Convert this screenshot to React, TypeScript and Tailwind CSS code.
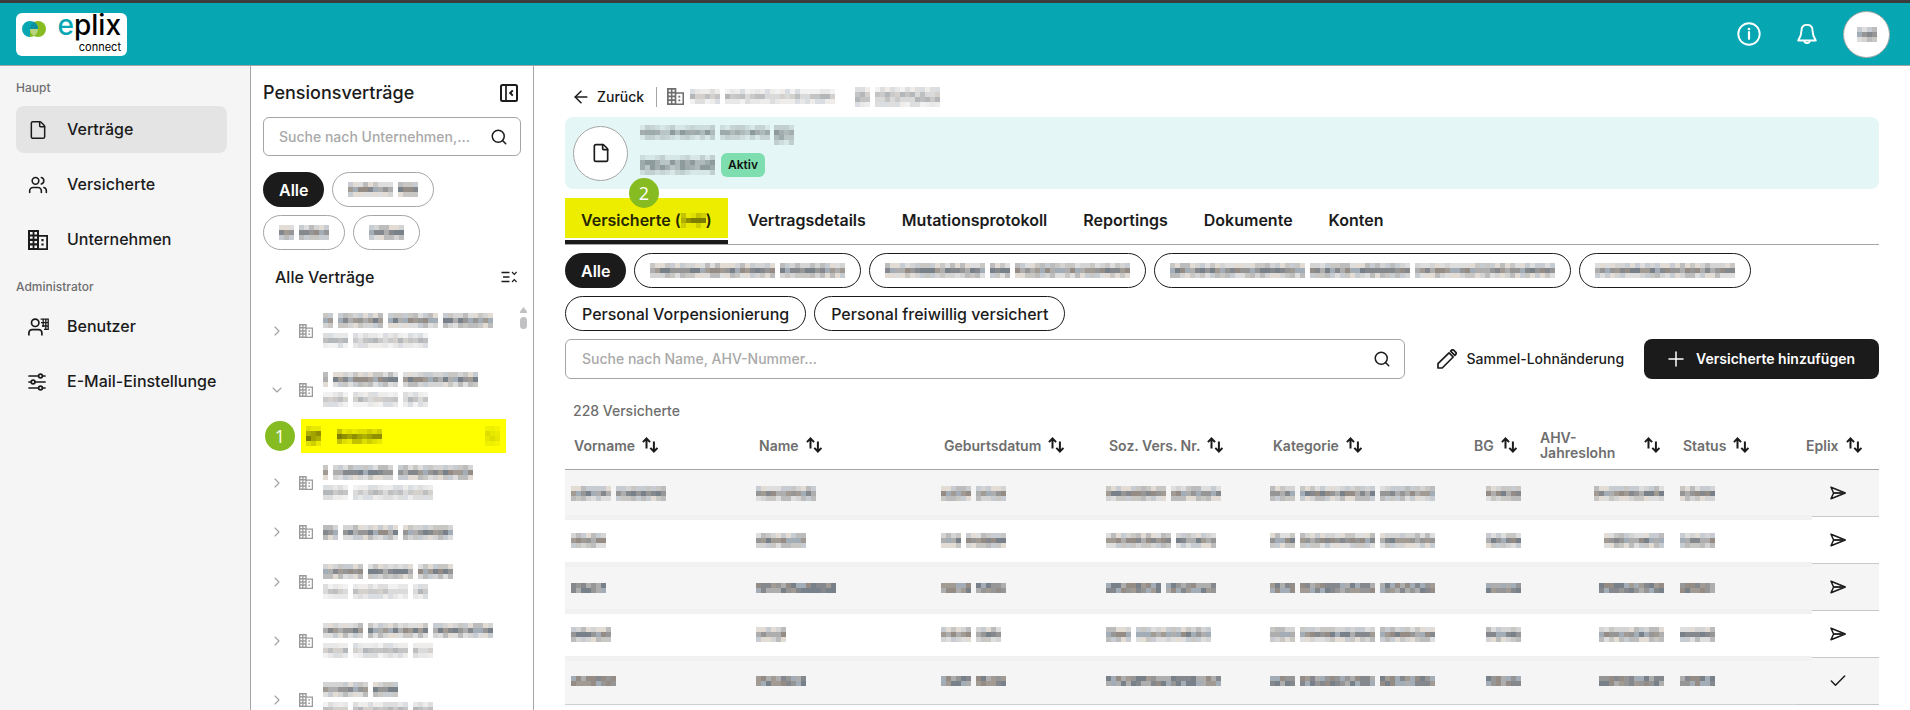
import { ReactNode, useState } from 'react';
import { ArrowLeft, Check, ChevronDown, ChevronRight, File, Plus, Search, Users } from 'lucide-react';

const CELL = 5;

const palettes = {
  dark: {
    edge: ['#d4d4d4', '#c9c7c4', '#c6ccd2', '#dedede', '#bcbcbc', '#e2dcd5'],
    core: ['#969696', '#85888c', '#a29b94', '#78818a', '#aeaeae', '#958c85', '#a3adb7'],
  },
  light: {
    edge: ['#e8e8e8', '#dedede', '#efedeb', '#dadee2', '#f2f2f2'],
    core: ['#cacaca', '#bdbfc1', '#d4d0cc', '#dadada', '#c4c4c4', '#b4b7ba'],
  },
  teal: {
    edge: ['#cddcdc', '#c1cfcf', '#d6e7e6', '#c7d4d4'],
    core: ['#9eabab', '#afbbbb', '#8e9b9c', '#bac5c5', '#a5aeae'],
  },
  yellow: {
    edge: ['#dede00', '#cfcf00', '#e8e800', '#c2c200'],
    core: ['#8f8f00', '#a3a300', '#7d7d00', '#b0b000'],
  },
  faint: {
    edge: ['#f4f400', '#efef00', '#f8f800'],
    core: ['#e6e600', '#dddd00', '#ebeb00'],
  },
};

type Tone = keyof typeof palettes;

interface MosaicProps {
  words: number[];
  rows?: number;
  tone?: Tone;
  seed?: number;
}

// Pixelated stand-in for hidden personal data, one number per word
function Mosaic({ words, rows = 3, tone = 'dark', seed = 1 }: MosaicProps) {
  const cols = words.reduce((sum, w) => sum + w, 0) + words.length - 1;
  const cells: ReactNode[] = [];
  let start = 0;

  words.forEach((word) => {
    for (let c = start; c < start + word; c += 1) {
      for (let r = 0; r < rows; r += 1) {
        const isEdge = r === 0 || (r === rows - 1 && rows > 2);
        const list = palettes[tone][isEdge && rows > 2 ? 'edge' : 'core'];
        const hash = Math.abs(Math.sin(c * 12.9 + r * 78.2 + seed * 37.7) * 43758);
        cells.push(
          <rect
            key={`${c}-${r}`}
            x={c * CELL}
            y={r * CELL}
            width={CELL}
            height={CELL}
            fill={list[Math.floor(hash) % list.length]}
          />,
        );
      }
    }
    start += word + 1;
  });

  return (
    <svg
      aria-hidden="true"
      className="block shrink-0"
      width={cols * CELL}
      height={rows * CELL}
      shapeRendering="crispEdges"
    >
      {cells}
    </svg>
  );
}

function BuildingIcon({ className = 'size-5' }: { className?: string }) {
  return (
    <svg viewBox="0 0 20 20" className={className} fill="currentColor" aria-hidden="true">
      <path
        fillRule="evenodd"
        d="M0 0h11v5h9v15H0zM2 2v2.4h2.6V2zM6.4 2v2.4H9V2zM2 6.4v2.4h2.6V6.4zM6.4 6.4v2.4H9V6.4zM2 10.9v2.4h2.6v-2.4zM6.4 10.9v2.4H9v-2.4zM2 15.4v2.6h2.6v-2.6zM6.4 15.4v2.6H9v-2.6zM11 6.8v11.4h7.2V6.8z"
      />
      <path d="M13.4 9h2.2v2.2h-2.2zM13.4 13.4h2.2v2.2h-2.2z" />
    </svg>
  );
}

function AdminIcon() {
  return (
    <svg viewBox="0 0 21 18" className="h-[18px] w-[21px]" fill="none" stroke="currentColor" strokeWidth="1.7" aria-hidden="true">
      <circle cx="7.2" cy="4.8" r="3.7" />
      <path d="M.9 17.6V15c0-2 1.3-3.3 3.3-3.3h6.4c2 0 3.3 1.3 3.3 3.3v2.6" />
      <path d="M12.6 1.2h7.6v10.2H16M13 4.6h7M14 8h6M15.2 1v8M17.8 1v10.2" strokeWidth="1.3" />
    </svg>
  );
}

function SlidersIcon() {
  return (
    <svg viewBox="0 0 18 18" className="size-[18px]" fill="none" stroke="currentColor" strokeWidth="1.7" strokeLinecap="round" aria-hidden="true">
      <path d="M1 3h9.4M14.6 3H17M1 9h2M7.2 9H17M1 15h9.4M14.6 15H17" />
      <circle cx="12.5" cy="3" r="1.9" />
      <circle cx="5.1" cy="9" r="1.9" />
      <circle cx="12.5" cy="15" r="1.9" />
    </svg>
  );
}

function PanelIcon() {
  return (
    <svg viewBox="0 0 18 18" className="size-[18px]" fill="none" stroke="currentColor" strokeWidth="2" aria-hidden="true">
      <rect x="1" y="1" width="16" height="16" rx="1.5" />
      <path d="M6 1v16" strokeWidth="1.7" />
      <path d="M12.8 6.4 10.2 9l2.6 2.6" />
    </svg>
  );
}

function CollapseIcon() {
  return (
    <svg viewBox="0 0 16 12" className="h-3 w-4" fill="none" stroke="currentColor" strokeWidth="1.5" aria-hidden="true">
      <path d="M.5 1.5h8M2 6h6.5M.5 10.5h8" />
      <path d="m11 1 2.3 2.4L15.6 1M11 11l2.3-2.4 2.3 2.4" strokeWidth="1.2" />
    </svg>
  );
}

function InfoIcon() {
  return (
    <svg viewBox="0 0 24 24" className="size-6" fill="none" stroke="currentColor" aria-hidden="true">
      <circle cx="12" cy="12" r="10.7" strokeWidth="1.9" />
      <path d="M12 10v6.8" strokeWidth="2.2" strokeLinecap="round" />
      <circle cx="12" cy="7" r="1.3" fill="currentColor" stroke="none" />
    </svg>
  );
}

function BellIcon() {
  return (
    <svg viewBox="0 0 20 20" className="size-5" fill="none" stroke="currentColor" strokeWidth="1.9" strokeLinejoin="round" aria-hidden="true">
      <path d="M10 .9C6.5.9 4.5 3.3 4.5 6.5c0 4.5-1.3 7-3.3 10h17.6c-2-3-3.3-5.5-3.3-10C15.5 3.3 13.5.9 10 .9z" />
      <path d="M7.2 17c.3 1.3 1.4 2.1 2.8 2.1s2.5-.8 2.8-2.1" />
    </svg>
  );
}

function SendIcon() {
  return (
    <svg viewBox="0 0 16 14" className="h-3.5 w-4" fill="none" stroke="currentColor" strokeWidth="1.5" strokeLinejoin="round" aria-hidden="true">
      <path d="M1 1.2 15.3 7 1 12.8 3.6 7z" />
      <path d="M4 7h9" strokeWidth="1.8" />
    </svg>
  );
}

function PencilIcon() {
  return (
    <svg viewBox="0 0 20 20" className="size-5" fill="none" stroke="currentColor" strokeWidth="1.7" strokeLinejoin="round" aria-hidden="true">
      <path d="M1 19v-4.3L12 3.8 16.2 8 5.2 19z" />
      <path d="m13.6 2.2.8-.8a1.8 1.8 0 0 1 2.5 0l1.7 1.700a1.8 1.8 0 0 1 0 2.500l-.8.8z" />
    </svg>
  );
}

function SortIcon() {
  return (
    <svg viewBox="0 0 16 16" className="size-4 shrink-0 text-[#1b1b1b]" fill="none" stroke="currentColor" strokeWidth="2" aria-hidden="true">
      <path d="M4.5 11.5V1.8M.9 5.1l3.6-3.6 3.6 3.6" />
      <path d="M11.9 4.5v9.7M8.3 10.9l3.6 3.6 3.6-3.6" />
    </svg>
  );
}

function Logo() {
  return (
    <a href="#start" aria-label="eplix connect" className="flex h-[43px] w-[111px] rounded-md bg-white pl-1.5">
      <svg viewBox="0 0 24 16" className="mt-2 h-4 w-6" aria-hidden="true">
        <circle cx="16" cy="8" r="8" fill="#86bc22" />
        <path d="M8 0a8 8 0 1 0 0 16V8h8a8 8 0 0 0-8-8z" fill="#06a7b2" />
        <path d="M8 8h7.900A8 8 0 0 1 12 14.900 8 8 0 0 1 8 8z" fill="#b9d480" />
        <path d="M8 8v8a8 8 0 0 0 4-1.100A8 8 0 0 1 8 8z" fill="#86bc22" />
        <path d="M12 1.100A8 8 0 0 1 16 8H8a8 8 0 0 1 4-6.900z" fill="#0a8fa0" />
      </svg>
      <span className="flex flex-1 flex-col items-end pr-1.5 text-black">
        <span className="text-[28px] leading-6 font-medium">
          <span className="text-[#06a7b2]">e</span>plix
        </span>
        <span className="mt-1 text-[11px] leading-3">connect</span>
      </span>
    </a>
  );
}

const mainNav = [
  { label: 'Verträge', icon: <File className="size-5" strokeWidth={1.8} /> },
  { label: 'Versicherte', icon: <Users className="size-5" strokeWidth={1.9} /> },
  { label: 'Unternehmen', icon: <BuildingIcon /> },
];

const adminNav = [
  { label: 'Benutzer', icon: <AdminIcon /> },
  { label: 'E-Mail-Einstellunge', icon: <SlidersIcon /> },
];

const contracts = [
  { title: [2, 9, 10, 10], sub: [5, 15] },
  { title: [1, 13, 15], sub: [5, 9, 5], open: true },
  { title: [1, 12, 15], sub: [5, 16] },
  { title: [3, 11, 10] },
  { title: [8, 9, 7], sub: [5, 11, 3] },
  { title: [8, 12, 12], sub: [5, 11, 4] },
  { title: [9, 5], sub: [5, 11, 4] },
];

const tabs = ['Vertragsdetails', 'Mutationsprotokoll', 'Reportings', 'Dokumente', 'Konten'];

const categoryChips = [
  [25, 13],
  [20, 4, 23],
  [27, 20, 28],
  [28],
];

const columns = [
  { label: 'Vorname', width: 185 },
  { label: 'Name', width: 185 },
  { label: 'Geburtsdatum', width: 165 },
  { label: 'Soz. Vers. Nr.', width: 164 },
  { label: 'Kategorie', width: 201 },
  { label: 'BG', width: 66 },
  { label: 'AHV- Jahreslohn', width: 143 },
  { label: 'Status', width: 123 },
  { label: 'Eplix', width: 82 },
];

const people = [
  { first: [8, 10], last: [12], birth: [6, 6], ahv: [12, 10], salary: 14, sent: false },
  { first: [7], last: [10], birth: [4, 8], ahv: [13, 8], salary: 12, sent: false },
  { first: [7], last: [16], birth: [6, 6], ahv: [11, 10], salary: 13, sent: false },
  { first: [8], last: [6], birth: [6, 5], ahv: [5, 15], salary: 13, sent: false },
  { first: [9], last: [10], birth: [6, 6], ahv: [23], salary: 13, sent: true },
];

function NavItem({ label, icon, active }: { label: string; icon: ReactNode; active: boolean }) {
  return (
    <a
      href={`#${label}`}
      aria-current={active ? 'page' : undefined}
      className={`flex h-[47px] items-center rounded-lg pl-3 text-base font-medium whitespace-nowrap text-[#1b1b1b] ${
        active ? 'bg-[#e4e4e4]' : ''
      }`}
    >
      <span className="flex w-[39px] shrink-0 items-center">{icon}</span>
      <span className="pb-0.5">{label}</span>
    </a>
  );
}

function StepMarker({ children, className }: { children: ReactNode; className: string }) {
  return (
    <span
      className={`absolute flex size-[30px] items-center justify-center rounded-full bg-[#86bc22] font-['Open_Sans',sans-serif] text-lg font-normal text-white ${className}`}
    >
      {children}
    </span>
  );
}

function App() {
  const [query, setQuery] = useState('');
  const [personQuery, setPersonQuery] = useState('');

  return (
    <div className="flex h-screen flex-col overflow-hidden bg-white font-['Inter','Liberation_Sans',sans-serif] text-[#1b1b1b]">
      <header className="flex h-[66px] shrink-0 items-center justify-between border-t-3 border-b border-t-[#3c3c3c] border-b-[#a5a5a5] bg-[#06a7b2] pr-5 pl-4">
        <Logo />
        <div className="flex items-center text-white">
          <button type="button" aria-label="Information" className="mr-9">
            <InfoIcon />
          </button>
          <button type="button" aria-label="Benachrichtigungen" className="mr-[26px]">
            <BellIcon />
          </button>
          <button
            type="button"
            aria-label="Profil"
            className="flex size-[47px] items-center justify-center rounded-full border border-[#a5a5a5] bg-white"
          >
            <Mosaic words={[4]} seed={3} />
          </button>
        </div>
      </header>

      <div className="flex min-h-0 flex-1">
        <nav className="w-[251px] shrink-0 border-r border-[#a5a5a5] bg-[#f5f5f5] pr-[23px] pl-4">
          <h2 className="flex h-10 items-end pb-2.5 text-xs font-medium text-[#6e6e6e]">Haupt</h2>
          <div className="flex flex-col gap-2">
            {mainNav.map((item, i) => (
              <NavItem key={item.label} label={item.label} icon={item.icon} active={i === 0} />
            ))}
          </div>
          <h2 className="flex h-10 items-end pb-2 text-xs font-medium text-[#6e6e6e]">Administrator</h2>
          <div className="flex flex-col gap-2">
            {adminNav.map((item) => (
              <NavItem key={item.label} label={item.label} icon={item.icon} active={false} />
            ))}
          </div>
        </nav>

        <aside className="w-[283px] shrink-0 overflow-hidden border-r border-[#a5a5a5] px-3">
          <div className="flex h-[51px] items-center justify-between pt-0.5 pr-[3px]">
            <h1 className="text-lg font-medium">Pensionsverträge</h1>
            <button type="button" aria-label="Seitenleiste einklappen">
              <PanelIcon />
            </button>
          </div>
          <div className="flex h-[39px] items-center rounded-md border border-[#a5a5a5] pr-3 pl-[15px]">
            <input
              type="text"
              aria-label="Suche nach Unternehmen"
              placeholder="Suche nach Unternehmen,..."
              value={query}
              onChange={(e) => setQuery(e.target.value)}
              className="min-w-0 flex-1 text-sm font-medium outline-none placeholder:text-[#a9a9a9]"
            />
            <Search className="size-[18px]" strokeWidth={2} />
          </div>
          <div className="mt-4 flex flex-wrap gap-2">
            <button type="button" className="h-[35px] rounded-full bg-[#1b1b1b] px-4 text-base font-semibold text-white">
              Alle
            </button>
            {[[9, 4], [3, 6], [7]].map((words, i) => (
              <button
                key={words.join()}
                type="button"
                aria-label={`Filter ${i + 1}`}
                className="flex h-[35px] items-center rounded-full border border-[#a5a5a5] px-[15px]"
              >
                <Mosaic words={words} seed={i + 5} />
              </button>
            ))}
          </div>
          <div className="flex h-[51px] items-center justify-between pt-0.5 pr-1 pl-3">
            <h2 className="text-base font-medium">Alle Verträge</h2>
            <button type="button" aria-label="Alle einklappen">
              <CollapseIcon />
            </button>
          </div>
          <div className="relative">
            <ul>
              {contracts.map((contract, i) => (
                <li key={contract.title.join()}>
                  <button type="button" aria-label={`Vertrag ${i + 1}`} className="flex items-center py-3 pl-1.5">
                    {contract.open ? (
                      <ChevronDown className="size-4 text-[#a0a0a0]" strokeWidth={1.6} />
                    ) : (
                      <ChevronRight className="size-4 text-[#a0a0a0]" strokeWidth={1.6} />
                    )}
                    <BuildingIcon className="mr-2.5 ml-3.5 size-3.5 text-[#9a9a9a]" />
                    <span className="flex flex-col gap-[5px]">
                      <Mosaic words={contract.title} seed={i + 11} />
                      {contract.sub && <Mosaic words={contract.sub} seed={i + 21} tone="light" />}
                    </span>
                  </button>
                  {contract.open && (
                    <div className="relative h-[34px] pr-[15px] pl-[38px]">
                      <button
                        type="button"
                        aria-label="Ausgewählter Vertrag"
                        className="flex h-[34px] w-full items-center bg-[#ffff00] pr-1.5 pl-[5px]"
                      >
                        <Mosaic words={[3]} rows={4} tone="yellow" seed={31} />
                        <span className="ml-4 flex-1">
                          <Mosaic words={[9]} tone="yellow" seed={32} />
                        </span>
                        <Mosaic words={[3]} rows={4} tone="faint" seed={33} />
                      </button>
                      <StepMarker className="top-0.5 left-0.5">1</StepMarker>
                    </div>
                  )}
                </li>
              ))}
            </ul>
            <div className="absolute top-1.5 -right-1.5 flex flex-col items-center gap-1">
              <svg viewBox="0 0 7 6" className="h-1.5 w-[7px]" fill="#c1c1c4" aria-hidden="true">
                <path d="M3.5 0 7 4.5V6H0V4.5z" />
              </svg>
              <span className="h-3 w-[7px] rounded-full bg-[#c1c1c4]" />
            </div>
          </div>
        </aside>

        <main className="min-w-0 flex-1 overflow-hidden px-[31px]">
          <div className="flex h-[51px] items-center pt-2.5">
            <button type="button" className="flex items-center gap-1.5 pl-1.5 text-sm font-medium">
              <ArrowLeft className="size-5" strokeWidth={1.8} />
              Zurück
            </button>
            <span className="mr-2.5 ml-3 h-5 w-px bg-[#a5a5a5]" />
            <BuildingIcon className="mr-1.5 size-[17px] text-[#6e6e6e]" />
            <Mosaic words={[6, 22]} tone="light" seed={41} />
            <span className="ml-5 flex">
              <Mosaic words={[3, 13]} rows={4} tone="light" seed={42} />
            </span>
          </div>

          <section className="flex h-[72px] items-center rounded-lg bg-[#e5f6f6] pl-2">
            <span className="flex size-[55px] items-center justify-center rounded-full border border-[#a5a5a5] bg-white">
              <File className="size-5" strokeWidth={2} />
            </span>
            <div className="ml-3 flex flex-col gap-2 pb-1">
              <div className="flex items-start gap-1">
                <Mosaic words={[15, 10]} tone="teal" seed={43} />
                <Mosaic words={[4]} rows={4} tone="teal" seed={44} />
              </div>
              <div className="flex items-center gap-1.5">
                <Mosaic words={[15]} rows={4} tone="teal" seed={45} />
                <span className="flex h-6 items-center rounded-md bg-[#7fdeb0] px-[7px] text-xs font-semibold text-[#111]">
                  Aktiv
                </span>
              </div>
            </div>
          </section>

          <div role="tablist" className="mt-[9px] flex gap-1 border-b border-[#a5a5a5] text-base font-semibold">
            <button
              type="button"
              role="tab"
              aria-selected="true"
              className="relative h-[46px] border-b-4 border-[#1b1b1b]"
            >
              <span className="mb-0.5 flex h-10 items-center bg-[#eded00] px-4 pt-1 text-[#262600]">
                Versicherte (
                <Mosaic words={[5]} tone="yellow" seed={46} />)
              </span>
              <StepMarker className="-top-5 left-16">2</StepMarker>
            </button>
            {tabs.map((tab) => (
              <button key={tab} type="button" role="tab" aria-selected="false" className="h-11 px-4">
                {tab}
              </button>
            ))}
          </div>

          <div className="mt-2 flex flex-wrap gap-2 text-base font-medium">
            <button type="button" className="h-[35px] rounded-full bg-[#1b1b1b] px-4 font-semibold text-white">
              Alle
            </button>
            {categoryChips.map((words, i) => (
              <button
                key={words.join()}
                type="button"
                aria-label={`Kategorie ${i + 1}`}
                className="flex h-[35px] items-center rounded-full border border-[#1b1b1b] px-[15px]"
              >
                <Mosaic words={words} seed={i + 51} />
              </button>
            ))}
            {['Personal Vorpensionierung', 'Personal freiwillig versichert'].map((label) => (
              <button key={label} type="button" className="h-[35px] rounded-full border border-[#1b1b1b] px-4">
                {label}
              </button>
            ))}
          </div>

          <div className="mt-2 flex h-10 items-stretch">
            <div className="flex flex-1 items-center rounded-md border border-[#a5a5a5] pr-[13px] pl-4">
              <input
                type="text"
                aria-label="Suche nach Name, AHV-Nummer"
                placeholder="Suche nach Name, AHV-Nummer..."
                value={personQuery}
                onChange={(e) => setPersonQuery(e.target.value)}
                className="min-w-0 flex-1 text-sm font-medium outline-none placeholder:text-[#a9a9a9]"
              />
              <Search className="size-[18px]" strokeWidth={2} />
            </div>
            <button type="button" className="ml-8 flex items-center gap-2.5 pr-5 text-sm font-medium">
              <PencilIcon />
              Sammel-Lohnänderung
            </button>
            <button
              type="button"
              className="flex items-center gap-2 rounded-lg bg-[#1b1b1b] pr-6 pl-5 text-sm font-semibold text-white"
            >
              <Plus className="size-6" strokeWidth={1.5} />
              Versicherte hinzufügen
            </button>
          </div>

          <p className="mt-[22px] pl-2 text-sm leading-5 font-medium text-[#6e6e6e]">228 Versicherte</p>

          <table className="w-full table-fixed border-separate border-spacing-0">
            <colgroup>
              {columns.map((col) => (
                <col key={col.label} style={{ width: col.width }} />
              ))}
            </colgroup>
            <thead>
              <tr className="h-[49px]">
                {columns.map((col) => (
                  <th
                    key={col.label}
                    scope="col"
                    className="border-b border-[#a5a5a5] pr-1 pl-[9px] text-left text-sm leading-[15px] font-semibold text-[#6e6e6e]"
                  >
                    <button
                      type="button"
                      className={`flex items-center gap-[7px] text-left ${
                        col.label === 'AHV- Jahreslohn' ? 'w-full justify-between pr-2.5' : ''
                      }`}
                    >
                      <span className={col.label === 'AHV- Jahreslohn' ? 'w-20' : 'whitespace-nowrap'}>
                        {col.label}
                      </span>
                      <SortIcon />
                    </button>
                  </th>
                ))}
              </tr>
            </thead>
            <tbody>
              {people.map((person, i) => {
                const isLast = i === people.length - 1;
                const cells = [
                  person.first,
                  person.last,
                  person.birth,
                  person.ahv,
                  [5, 15, 11],
                  [7],
                  [person.salary],
                  [7],
                ];
                return (
                  <tr key={person.first.concat(person.last).join()} className="h-[47px] odd:bg-[#f5f5f5]">
                    {cells.map((words, c) => (
                      <td
                        key={columns[c].label}
                        className={
                          isLast
                            ? 'border-b border-[#d0d0d0] px-1.5'
                            : 'relative px-1.5 after:absolute after:inset-x-0 after:-bottom-[3px] after:h-[5px] after:bg-[#f1f1f2] nth-8:after:-right-[15px]'
                        }
                      >
                        <div className={c === 5 || c === 6 ? 'flex justify-end pr-1' : 'flex'}>
                          <Mosaic words={words} rows={i % 2 === 0 && i > 0 ? 2 : 3} seed={i * 9 + c + 61} />
                        </div>
                      </td>
                    ))}
                    <td className="border-b border-[#c8c8c8]">
                      <button
                        type="button"
                        aria-label={person.sent ? 'Gesendet' : 'Senden'}
                        className="mx-auto flex w-4 justify-center"
                      >
                        {person.sent ? <Check className="size-5 shrink-0" strokeWidth={1.8} /> : <SendIcon />}
                      </button>
                    </td>
                  </tr>
                );
              })}
            </tbody>
          </table>
        </main>
      </div>
    </div>
  );
}

export default App;
